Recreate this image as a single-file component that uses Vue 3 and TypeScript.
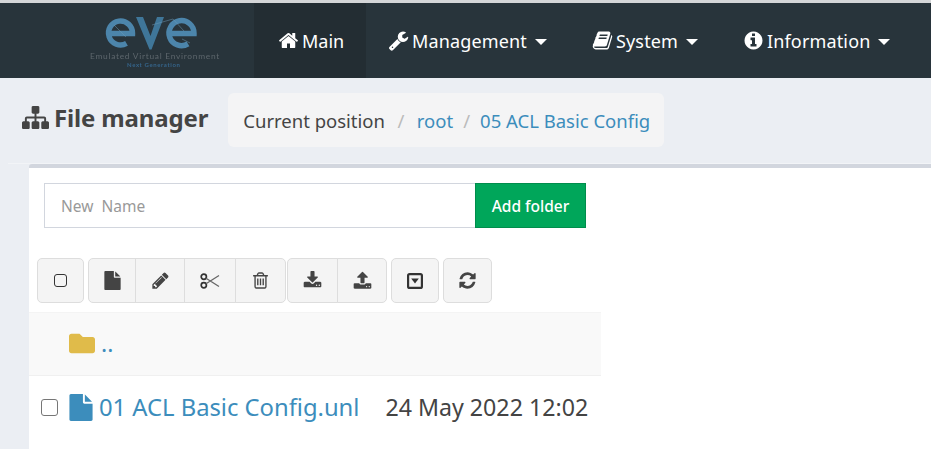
<script setup lang="ts">
const P: Record<string, string> = {
  home: 'M1472 992v480q0 26-19 45t-45 19h-384v-384h-256v384h-384q-26 0-45-19t-19-45v-480q0-1 .5-3t.5-3l575-474 575 474q1 2 1 6zm223-69l-62 74q-8 9-21 11h-3q-13 0-21-7l-692-577-692 577q-12 8-24 7-13-2-21-11l-62-74q-8-10-7-23.500t11-21.500l719-599q32-26 76-26t76 26l244 204v-195q0-14 9-23t23-9h192q14 0 23 9t9 23v408l219 182q10 8 11 21.500t-7 23.500z',
  wrench: 'M448 1472q0-26-19-45t-45-19-45 19-19 45 19 45 45 19 45-19 19-45zm644-420l-682 682q-37 37-90 37-52 0-91-37l-106-108q-38-36-38-90 0-53 38-91l681-681q39 98 114.500 173.500t173.500 114.500zm634-435q0 39-23 106-47 134-164.500 217.500t-258.500 83.500q-185 0-316.500-131.500t-131.500-316.500 131.500-316.500 316.500-131.500q58 0 121.500 16.500t107.500 46.500q16 11 16 28t-16 28l-293 169v224l193 107q5-3 79-48.500t135.500-81 70.500-35.500q15 0 23.500 10t8.500 25z',
  book: 'M1703 478q40 57 18 129l-275 906q-19 64-76.500 107.500t-122.500 43.500h-923q-77 0-148.500-53.500t-99.500-131.500q-24-67-2-127 0-4 3-27t4-37q1-8-3-21.500t-3-19.500q2-11 8-21t16.500-23.500 16.500-23.500q23-38 45-91.500t30-91.500q3-10 .5-30t-.5-28q3-11 17-28t17-23q21-36 42-92t25-90q1-9-2.500-32t.5-28q4-13 22-30.500t22-22.500q19-26 42.500-84.500t27.500-96.500q1-8-3-25.500t-2-26.500q2-8 9-18t18-23 17-21q8-12 16.500-30.500t15-35 16-36 19.500-32 26.500-23.500 36-11.500 47.500 5.500l-1 3q38-9 51-9h761q74 0 114 56t18 130l-274 906q-36 119-71.500 153.500t-128.500 34.500h-869q-27 0-38 15-11 16-1 43 24 70 144 70h923q29 0 56-15.500t35-41.500l300-987q7-22 5-57 38 15 59 43zm-1064 2q-4 13 2 22.500t20 9.500h608q13 0 25.500-9.500t16.500-22.500l21-64q4-13-2-22.500t-20-9.500h-608q-13 0-25.500 9.500t-16.500 22.500zm-83 256q-4 13 2 22.500t20 9.500h608q13 0 25.500-9.500t16.500-22.500l21-64q4-13-2-22.500t-20-9.500h-608q-13 0-25.500 9.500t-16.500 22.500z',
  info: 'M1152 1376v-160q0-14-9-23t-23-9h-96v-512q0-14-9-23t-23-9h-320q-14 0-23 9t-9 23v160q0 14 9 23t23 9h96v320h-96q-14 0-23 9t-9 23v160q0 14 9 23t23 9h448q14 0 23-9t9-23zm-128-896v-160q0-14-9-23t-23-9h-192q-14 0-23 9t-9 23v160q0 14 9 23t23 9h192q14 0 23-9t9-23zm640 416q0 209-103 385.500t-279.500 279.500-385.500 103-385.500-103-279.500-279.500-103-385.500 103-385.500 279.500-279.500 385.500-103 385.500 103 279.500 279.500 103 385.500z',
  sitemap: 'M1792 1248v320q0 40-28 68t-68 28h-320q-40 0-68-28t-28-68v-320q0-40 28-68t68-28h96v-192h-512v192h96q40 0 68 28t28 68v320q0 40-28 68t-68 28h-320q-40 0-68-28t-28-68v-320q0-40 28-68t68-28h96v-192h-512v192h96q40 0 68 28t28 68v320q0 40-28 68t-68 28h-320q-40 0-68-28t-28-68v-320q0-40 28-68t68-28h96v-192q0-52 38-90t90-38h512v-192h-96q-40 0-68-28t-28-68v-320q0-40 28-68t68-28h320q40 0 68 28t28 68v320q0 40-28 68t-68 28h-96v192h512q52 0 90 38t38 90v192h96q40 0 68 28t28 68z',
  file: 'M1152 512v-472q22 14 36 28l408 408q14 14 28 36h-472zm-128 32q0 40 28 68t68 28h544v1056q0 40-28 68t-68 28h-1344q-40 0-68-28t-28-68v-1600q0-40 28-68t68-28h800v544z',
  pencil: 'M491 1536l91-91-235-235-91 91v107h128v128h107zm523-928q0-22-22-22-10 0-17 7l-542 542q-7 7-7 17 0 22 22 22 10 0 17-7l542-542q7-7 7-17zm-54-192l416 416-832 832h-416v-416zm683 96q0 53-37 90l-166 166-416-416 166-165q36-38 90-38 53 0 91 38l235 234q37 39 37 91z',
  trash: 'M704 736v576q0 14-9 23t-23 9h-64q-14 0-23-9t-9-23v-576q0-14 9-23t23-9h64q14 0 23 9t9 23zm256 0v576q0 14-9 23t-23 9h-64q-14 0-23-9t-9-23v-576q0-14 9-23t23-9h64q14 0 23 9t9 23zm256 0v576q0 14-9 23t-23 9h-64q-14 0-23-9t-9-23v-576q0-14 9-23t23-9h64q14 0 23 9t9 23zm128 724v-948h-896v948q0 22 7 40.500t14.500 27 10.500 8.500h832q3 0 10.500-8.500t14.500-27 7-40.500zm-672-1076h448l-48-117q-7-9-17-11h-317q-10 2-17 11zm928 32v64q0 14-9 23t-23 9h-96v948q0 83-47 143.500t-113 60.500h-832q-66 0-113-58.500t-47-141.500v-952h-96q-14 0-23-9t-9-23v-64q0-14 9-23t23-9h309l70-167q15-37 54-63t79-26h320q40 0 79 26t54 63l70 167h309q14 0 23 9t9 23z',
  download: 'M1344 1344q0-26-19-45t-45-19-45 19-19 45 19 45 45 19 45-19 19-45zm256 0q0-26-19-45t-45-19-45 19-19 45 19 45 45 19 45-19 19-45zm128-224v320q0 40-28 68t-68 28h-1472q-40 0-68-28t-28-68v-320q0-40 28-68t68-28h465l135 136q58 56 136 56t136-56l136-136h464q40 0 68 28t28 68zm-325-569q17 41-14 70l-448 448q-18 19-45 19t-45-19l-448-448q-31-29-14-70 17-39 59-39h256v-448q0-26 19-45t45-19h256q26 0 45 19t19 45v448h256q42 0 59 39z',
  upload: 'M1344 1472q0-26-19-45t-45-19-45 19-19 45 19 45 45 19 45-19 19-45zm256 0q0-26-19-45t-45-19-45 19-19 45 19 45 45 19 45-19 19-45zm128-224v320q0 40-28 68t-68 28h-1472q-40 0-68-28t-28-68v-320q0-40 28-68t68-28h427q21 56 70.500 92t110.500 36h256q61 0 110.500-36t70.500-92h427q40 0 68 28t28 68zm-325-648q-17 40-59 40h-256v448q0 26-19 45t-45 19h-256q-26 0-45-19t-19-45v-448h-256q-42 0-59-40-17-39 14-69l448-448q18-19 45-19t45 19l448 448q31 30 14 69z',
  refresh: 'M1639 1056q0 5-1 7-64 268-268 434.500t-478 166.500q-146 0-282.500-55t-243.500-157l-129 129q-19 19-45 19t-45-19-19-45v-448q0-26 19-45t45-19h448q26 0 45 19t19 45-19 45l-137 137q71 66 161 102t187 36q134 0 250-65t186-179q11-17 53-117 8-23 30-23h192q13 0 22.500 9.500t9.500 22.500zm25-800v448q0 26-19 45t-45 19h-448q-26 0-45-19t-19-45 19-45l138-138q-148-137-349-137-134 0-250 65t-186 179q-11 17-53 117-8 23-30 23h-199q-13 0-22.500-9.500t-9.500-22.500v-7q65-268 270-434.500t480-166.500q146 0 284 55.500t245 156.500l130-129q19-19 45-19t45 19 19 45z',
}
const navItems = [
  { label: 'Main', icon: P.home, active: true, caret: false },
  { label: 'Management', icon: P.wrench, active: false, caret: true },
  { label: 'System', icon: P.book, active: false, caret: true },
  { label: 'Information', icon: P.info, active: false, caret: true },
]
</script>

<template>
  <div class="page">
    <header class="nav">
      <div class="brand">
        <svg class="logo" width="140" height="56" viewBox="0 0 140 56">
          <g fill="none" stroke-width="5.500" stroke="#4c85ab">
            <path d="M19 20.500H42.500A12 12 0 1 0 36.500 30.400" />
            <path d="M80 20.500H104A12.500 12.500 0 1 0 98 30.800" />
          </g>
          <path d="M46 4h7l7.500 19L67 4h7L61.500 36.500h-2z" fill="#3f7699" />
          <path d="M62 12L83 6L94 18M24 12L36 24M92 26L100 30" fill="none" stroke="#6f9bb8" stroke-width=".7" opacity=".7" />
          <text x="0" y="45.500" class="lg1">Emulated Virtual Environment</text>
          <text x="37" y="53.500" class="lg2">Next Generation</text>
        </svg>
      </div>
      <a v-for="n in navItems" :key="n.label" class="nav-item" :class="{ active: n.active, [n.label.toLowerCase()]: true }">
        <svg class="nav-ic" viewBox="0 0 1792 1792"><path :d="n.icon" fill="#fff" /></svg>
        <span>{{ n.label }}</span>
        <i v-if="n.caret" class="caret"></i>
      </a>
    </header>

    <section class="title-row">
      <h1 class="title">
        <svg class="title-ic" viewBox="0 0 1792 1792"><path :d="P.sitemap" fill="#444" /></svg>
        File manager
      </h1>
      <nav class="crumbs">
        <span>Current position</span>
        <i class="sep-a">/</i>
        <a>root</a>
        <i>/</i>
        <a>05 ACL Basic Config</a>
      </nav>
    </section>

    <div class="content">
      <main class="panel">
        <form class="add" @submit.prevent>
          <input class="name" type="text" placeholder="New  Name" />
          <button class="add-btn" type="button">Add folder</button>
        </form>

        <div class="toolbar">
          <div class="group"><button class="tb w47"><span class="tb-check"></span></button></div>
          <div class="group">
            <button class="tb w48"><svg class="i18" viewBox="0 0 1792 1792"><path :d="P.file" /></svg></button>
            <button class="tb w50"><svg class="i18" viewBox="0 0 1792 1792"><path :d="P.pencil" /></svg></button>
            <button class="tb w52">
              <svg width="20" height="16" viewBox="0 0 20 16" fill="none">
                <circle cx="3.800" cy="3.800" r="2.600" stroke="#333" stroke-width="1.700" />
                <circle cx="3.800" cy="12.200" r="2.600" stroke="#333" stroke-width="1.700" />
                <path d="M6 5.300L19 13.500M6 10.700L19 2.500" stroke="#666" stroke-width="1.300" />
              </svg>
            </button>
            <button class="tb w51"><svg class="i18" viewBox="0 0 1792 1792"><path :d="P.trash" /></svg></button>
          </div>
          <div class="group tight">
            <button class="tb w51"><svg class="i18" viewBox="0 0 1792 1792"><path :d="P.download" /></svg></button>
            <button class="tb w50"><svg class="i18" viewBox="0 0 1792 1792"><path :d="P.upload" /></svg></button>
          </div>
          <div class="group">
            <button class="tb w48">
              <svg width="16" height="16" viewBox="0 0 16 16">
                <rect x="1.100" y="1.100" width="13.800" height="13.800" rx="1.500" fill="none" stroke="#333" stroke-width="2.200" />
                <path d="M4.200 5.500h7.600L8 10.500z" fill="#333" />
              </svg>
            </button>
          </div>
          <div class="group"><button class="tb w49"><svg class="i18" viewBox="0 0 1792 1792"><path :d="P.refresh" /></svg></button></div>
        </div>

        <div class="list">
          <div class="row up">
            <svg class="folder" viewBox="0 0 512 384"><path d="M464 64H272L208 0H48C21.490 0 0 21.490 0 48v288c0 26.510 21.490 48 48 48h416c26.510 0 48-21.490 48-48V112c0-26.510-21.490-48-48-48z" fill="#e0bb4a" /></svg>
            <a class="up-link">..</a>
          </div>
          <div class="row file">
            <input class="check" type="checkbox" />
            <svg class="file-ic" viewBox="128 0 1536 1792"><path :d="P.file" fill="#3c8dbc" /></svg>
            <a class="file-name">01 ACL Basic Config.unl</a>
            <span class="date">24 May 2022 12:02</span>
          </div>
        </div>
      </main>
    </div>
  </div>
</template>

<style>
html, body { margin: 0; height: 100%; overflow: hidden; background: #ebeef3; }
</style>

<style scoped>
.page {
  font-family: "Noto Sans", "Open Sans", sans-serif;
  color: #444;
  height: 449px;
  overflow: hidden;
  background: #ebeef3;
  display: flex;
  flex-direction: column;
}
.nav {
  display: flex;
  height: 75px;
  flex: none;
  border-top: 3px solid #d4d6d8;
  background: #28343b;
  box-sizing: content-box;
}
.brand { width: 254px; flex: none; display: flex; align-items: center; padding-left: 90px; box-sizing: border-box; }
.logo { display: block; filter: blur(.35px); overflow: visible; }
.lg1 { font: 8.400px "Lato", sans-serif; fill: #5d666c; letter-spacing: .72px; }
.lg2 { font: bold 6px "Lato", sans-serif; fill: #35648a; letter-spacing: .6px; }
.nav-item {
  display: flex;
  align-items: center;
  color: #fff;
  font-size: 18px;
  padding: 0 22px;
  box-sizing: border-box;
}
.nav-item span { letter-spacing: .15px; }
.nav-item.active { background: #232d33; padding: 0 23px 0 24px; width: 112px; }
.nav-item.active span { letter-spacing: 0; }
.nav-item.management { width: 204px; }
.nav-item.system { width: 151px; }
.nav-ic { width: 21px; height: 21px; margin-right: 3px; flex: none; }
.caret {
  margin-left: 8px;
  margin-top: 3px;
  border-left: 6px solid transparent;
  border-right: 6px solid transparent;
  border-top: 6px solid #fff;
}
.title-row { height: 85px; flex: none; display: flex; align-items: center; padding: 0 0 1px 22px; box-sizing: border-box; }
.title { margin: -5px 0 0; display: flex; align-items: center; font-size: 24px; font-weight: 700; color: #444; letter-spacing: -.15px; }
.title-ic { width: 27px; height: 27px; margin-right: 5px; }
.crumbs {
  margin-left: 20px;
  height: 54px;
  display: flex;
  align-items: center;
  padding: 0 14px 0 15px;
  background: #f4f4f5;
  border-radius: 6px;
  font-size: 18.500px;
  color: #444;
}
.crumbs a { color: #3c8dbc; }
.crumbs i { font-style: normal; color: #bbb; margin: 0 10px; }
.crumbs i.sep-a { margin: 0 12.500px; }
.content { margin-left: 8px; padding-left: 21px; border-top: 1px solid #f2f4f7; flex: 1; min-height: 0; }
.panel { height: 100%; background: #fff; border-top: 4px solid #d2d6de; border-top-left-radius: 3px; box-sizing: border-box; }
.add { display: flex; padding: 15px 0 0 15px; }
.name {
  width: 431px;
  height: 45px;
  box-sizing: border-box;
  border: 1px solid #d2d6de;
  border-right: none;
  padding: 0 16px;
  font: 15.500px "Noto Sans", sans-serif;
  outline: none;
}
.name::placeholder { color: #999; opacity: 1; }
.add-btn {
  width: 111px;
  height: 45px;
  border: 1px solid #008d4c;
  background: #00a65a;
  color: #fff;
  font: 500 15.500px "Noto Sans", sans-serif;
  padding: 0;
}
.toolbar { display: flex; gap: 4px; padding: 30px 0 0 8px; }
.group { display: flex; height: 45px; }
.group.tight { margin-left: -3px; }
.tb {
  height: 45px;
  box-sizing: border-box;
  background: #f4f4f4;
  border: 1px solid #ddd;
  margin-left: -1px;
  padding: 0;
  display: flex;
  align-items: center;
  justify-content: center;
}
.tb:first-child { margin-left: 0; border-radius: 5px 0 0 5px; }
.tb:last-child { border-radius: 0 5px 5px 0; }
.tb:only-child { border-radius: 5px; }
.w47 { width: 47px; }
.w48 { width: 48px; }
.w49 { width: 49px; }
.w50 { width: 50px; }
.w51 { width: 51px; }
.w52 { width: 52px; }
.tb svg path:not([fill]):not([stroke]) { fill: #444; }
.i18 { width: 19px; height: 19px; }
.tb-check { display: block; width: 11px; height: 11px; border: 1.500px solid #333; border-radius: 3px; }
.list { width: 572px; margin-top: 9px; }
.row { display: flex; align-items: center; box-sizing: border-box; }
.up { height: 64px; background: #f9f9f9; border-top: 1px solid #f4f4f4; border-bottom: 1px solid #f0f0f0; padding-left: 40px; }
.folder { width: 26px; height: 21px; margin-top: -2px; }
.up-link { color: #3c8dbc; font-size: 23px; margin: -2px 0 0 6px; }
.file { height: 66px; padding: 0 0 4px 12px; }
.check {
  appearance: none;
  width: 17px;
  height: 17px;
  margin: 0;
  border: 1.500px solid #767676;
  border-radius: 3px;
  background: #fff;
  box-sizing: border-box;
}
.file-ic { width: 24px; height: 27px; margin-left: 11px; }
.file-name { color: #3c8dbc; font-size: 23.800px; margin-left: 6px; letter-spacing: -.02px; }
.date { font-size: 23.200px; color: #444; margin-left: 26px; white-space: nowrap; }
</style>
